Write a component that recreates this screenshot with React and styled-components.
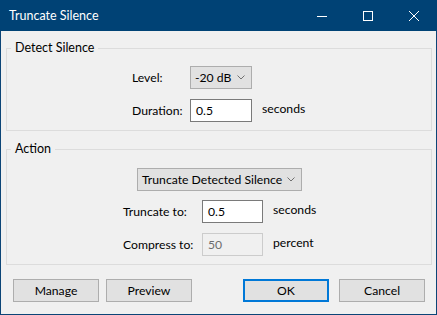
import React from 'react';
import styled, { createGlobalStyle } from 'styled-components';

const GlobalStyle = createGlobalStyle`
  html, body {
    margin: 0;
    padding: 0;
    background: #f0f0f0;
  }
  * {
    box-sizing: border-box;
  }
`;

const Window = styled.div`
  width: 437px;
  height: 315px;
  border: 1px solid #0c4577;
  border-top: none;
  background: #f0f0f0;
  display: flex;
  flex-direction: column;
  font-family: 'Lato', 'Liberation Sans', sans-serif;
  font-size: 12.2px;
  color: #000;
`;

const TitleBar = styled.div`
  height: 31px;
  margin: 0 -1px;
  background: #004275;
  color: #fff;
  display: flex;
  align-items: center;
`;

const Title = styled.div`
  flex: 1;
  padding-left: 9px;
  font-size: 12.5px;
`;

const CaptionButton = styled.div`
  width: 46px;
  height: 31px;
  display: flex;
  align-items: center;
  justify-content: center;
`;

const Body = styled.div`
  flex: 1;
  display: flex;
  flex-direction: column;
  padding: 9px 4px 0 5px;
`;

const Group = styled.fieldset`
  margin: ${(p) => (p.$first ? '0' : '10px 0 0 0')};
  padding: ${(p) => p.$pt}px 0 8px 0;
  border: 1px solid #dcdcdc;
  min-width: 0;
`;

const Legend = styled.legend`
  margin-left: 4px;
  padding: 0 4px;
  line-height: 16px;
  font-size: 12.5px;
`;

const Grid = styled.div`
  display: grid;
  grid-template-columns: ${(p) => p.$label}px ${(p) => p.$ctrl}px 54px;
  row-gap: ${(p) => p.$rowGap}px;
  justify-content: center;
  align-items: center;
  padding-left: ${(p) => p.$shift || 0}px;
`;

const Label = styled.span`
  white-space: nowrap;
`;

const Suffix = styled.span`
  padding-left: 10px;
  white-space: nowrap;
  position: relative;
  top: -2px;
`;

const TextInput = styled.div`
  height: 23px;
  border: 1px solid ${(p) => (p.$disabled ? '#cccccc' : '#7a7a7a')};
  background: ${(p) => (p.$disabled ? '#f0f0f0' : '#ffffff')};
  color: ${(p) => (p.$disabled ? '#6d6d6d' : '#000')};
  display: flex;
  align-items: center;
  padding-left: 5px;
`;

const Select = styled.div`
  height: 23px;
  width: ${(p) => p.$w}px;
  border: 1px solid #adadad;
  background: #e1e1e1;
  display: flex;
  align-items: center;
  justify-content: space-between;
  padding: 0 6px 0 4px;
  white-space: nowrap;
`;

const CenterRow = styled.div`
  display: flex;
  justify-content: center;
  margin-bottom: 9px;
  padding-left: 1px;
`;

const ButtonRow = styled.div`
  display: flex;
  margin-top: 14px;
  padding: 0 7px 0 7px;
`;

const Button = styled.div`
  width: 86px;
  height: 23px;
  border: ${(p) => (p.$default ? '2px solid #0078d7' : '1px solid #adadad')};
  background: #e1e1e1;
  display: flex;
  align-items: center;
  justify-content: center;
  margin-left: ${(p) => p.$ml || 0}px;
`;

const Spacer = styled.div`
  flex: 1;
`;

function Chevron() {
  return (
    <svg width="8" height="5" viewBox="0 0 8 5">
      <path d="M0.5 0.5 L4 4 L7.5 0.5" fill="none" stroke="#707070" strokeWidth="1" />
    </svg>
  );
}

export default function App() {
  return (
    <>
      <GlobalStyle />
      <Window>
        <TitleBar>
          <Title>Truncate Silence</Title>
          <CaptionButton>
            <svg width="10" height="10" viewBox="0 0 10 10">
              <path d="M0 5.5 H10" stroke="#fff" strokeWidth="1" />
            </svg>
          </CaptionButton>
          <CaptionButton>
            <svg width="10" height="10" viewBox="0 0 10 10">
              <rect x="0.5" y="0.5" width="9" height="9" fill="none" stroke="#fff" strokeWidth="1" />
            </svg>
          </CaptionButton>
          <CaptionButton>
            <svg width="10" height="10" viewBox="0 0 10 10">
              <path d="M0 0 L10 10 M10 0 L0 10" stroke="#fff" strokeWidth="1" />
            </svg>
          </CaptionButton>
        </TitleBar>
        <Body>
          <Group $first $pt={10}>
            <Legend>Detect Silence</Legend>
            <Grid $label={58} $ctrl={62} $rowGap={10} $shift={0}>
              <Label>Level:</Label>
              <Select $w={62}>
                <span>-20 dB</span>
                <Chevron />
              </Select>
              <span />
              <Label>Duration:</Label>
              <TextInput>0.5</TextInput>
              <Suffix>seconds</Suffix>
            </Grid>
          </Group>
          <Group $pt={11}>
            <Legend>Action</Legend>
            <CenterRow>
              <Select $w={165}>
                <span>Truncate Detected Silence</span>
                <Chevron />
              </Select>
            </CenterRow>
            <Grid $label={79} $ctrl={61} $rowGap={10} $shift={2}>
              <Label>Truncate to:</Label>
              <TextInput>0.5</TextInput>
              <Suffix>seconds</Suffix>
              <Label>Compress to:</Label>
              <TextInput $disabled>50</TextInput>
              <Suffix>percent</Suffix>
            </Grid>
          </Group>
          <ButtonRow>
            <Button>Manage</Button>
            <Button $ml={7}>Preview</Button>
            <Spacer />
            <Button $default>OK</Button>
            <Button $ml={10}>Cancel</Button>
          </ButtonRow>
        </Body>
      </Window>
    </>
  );
}
